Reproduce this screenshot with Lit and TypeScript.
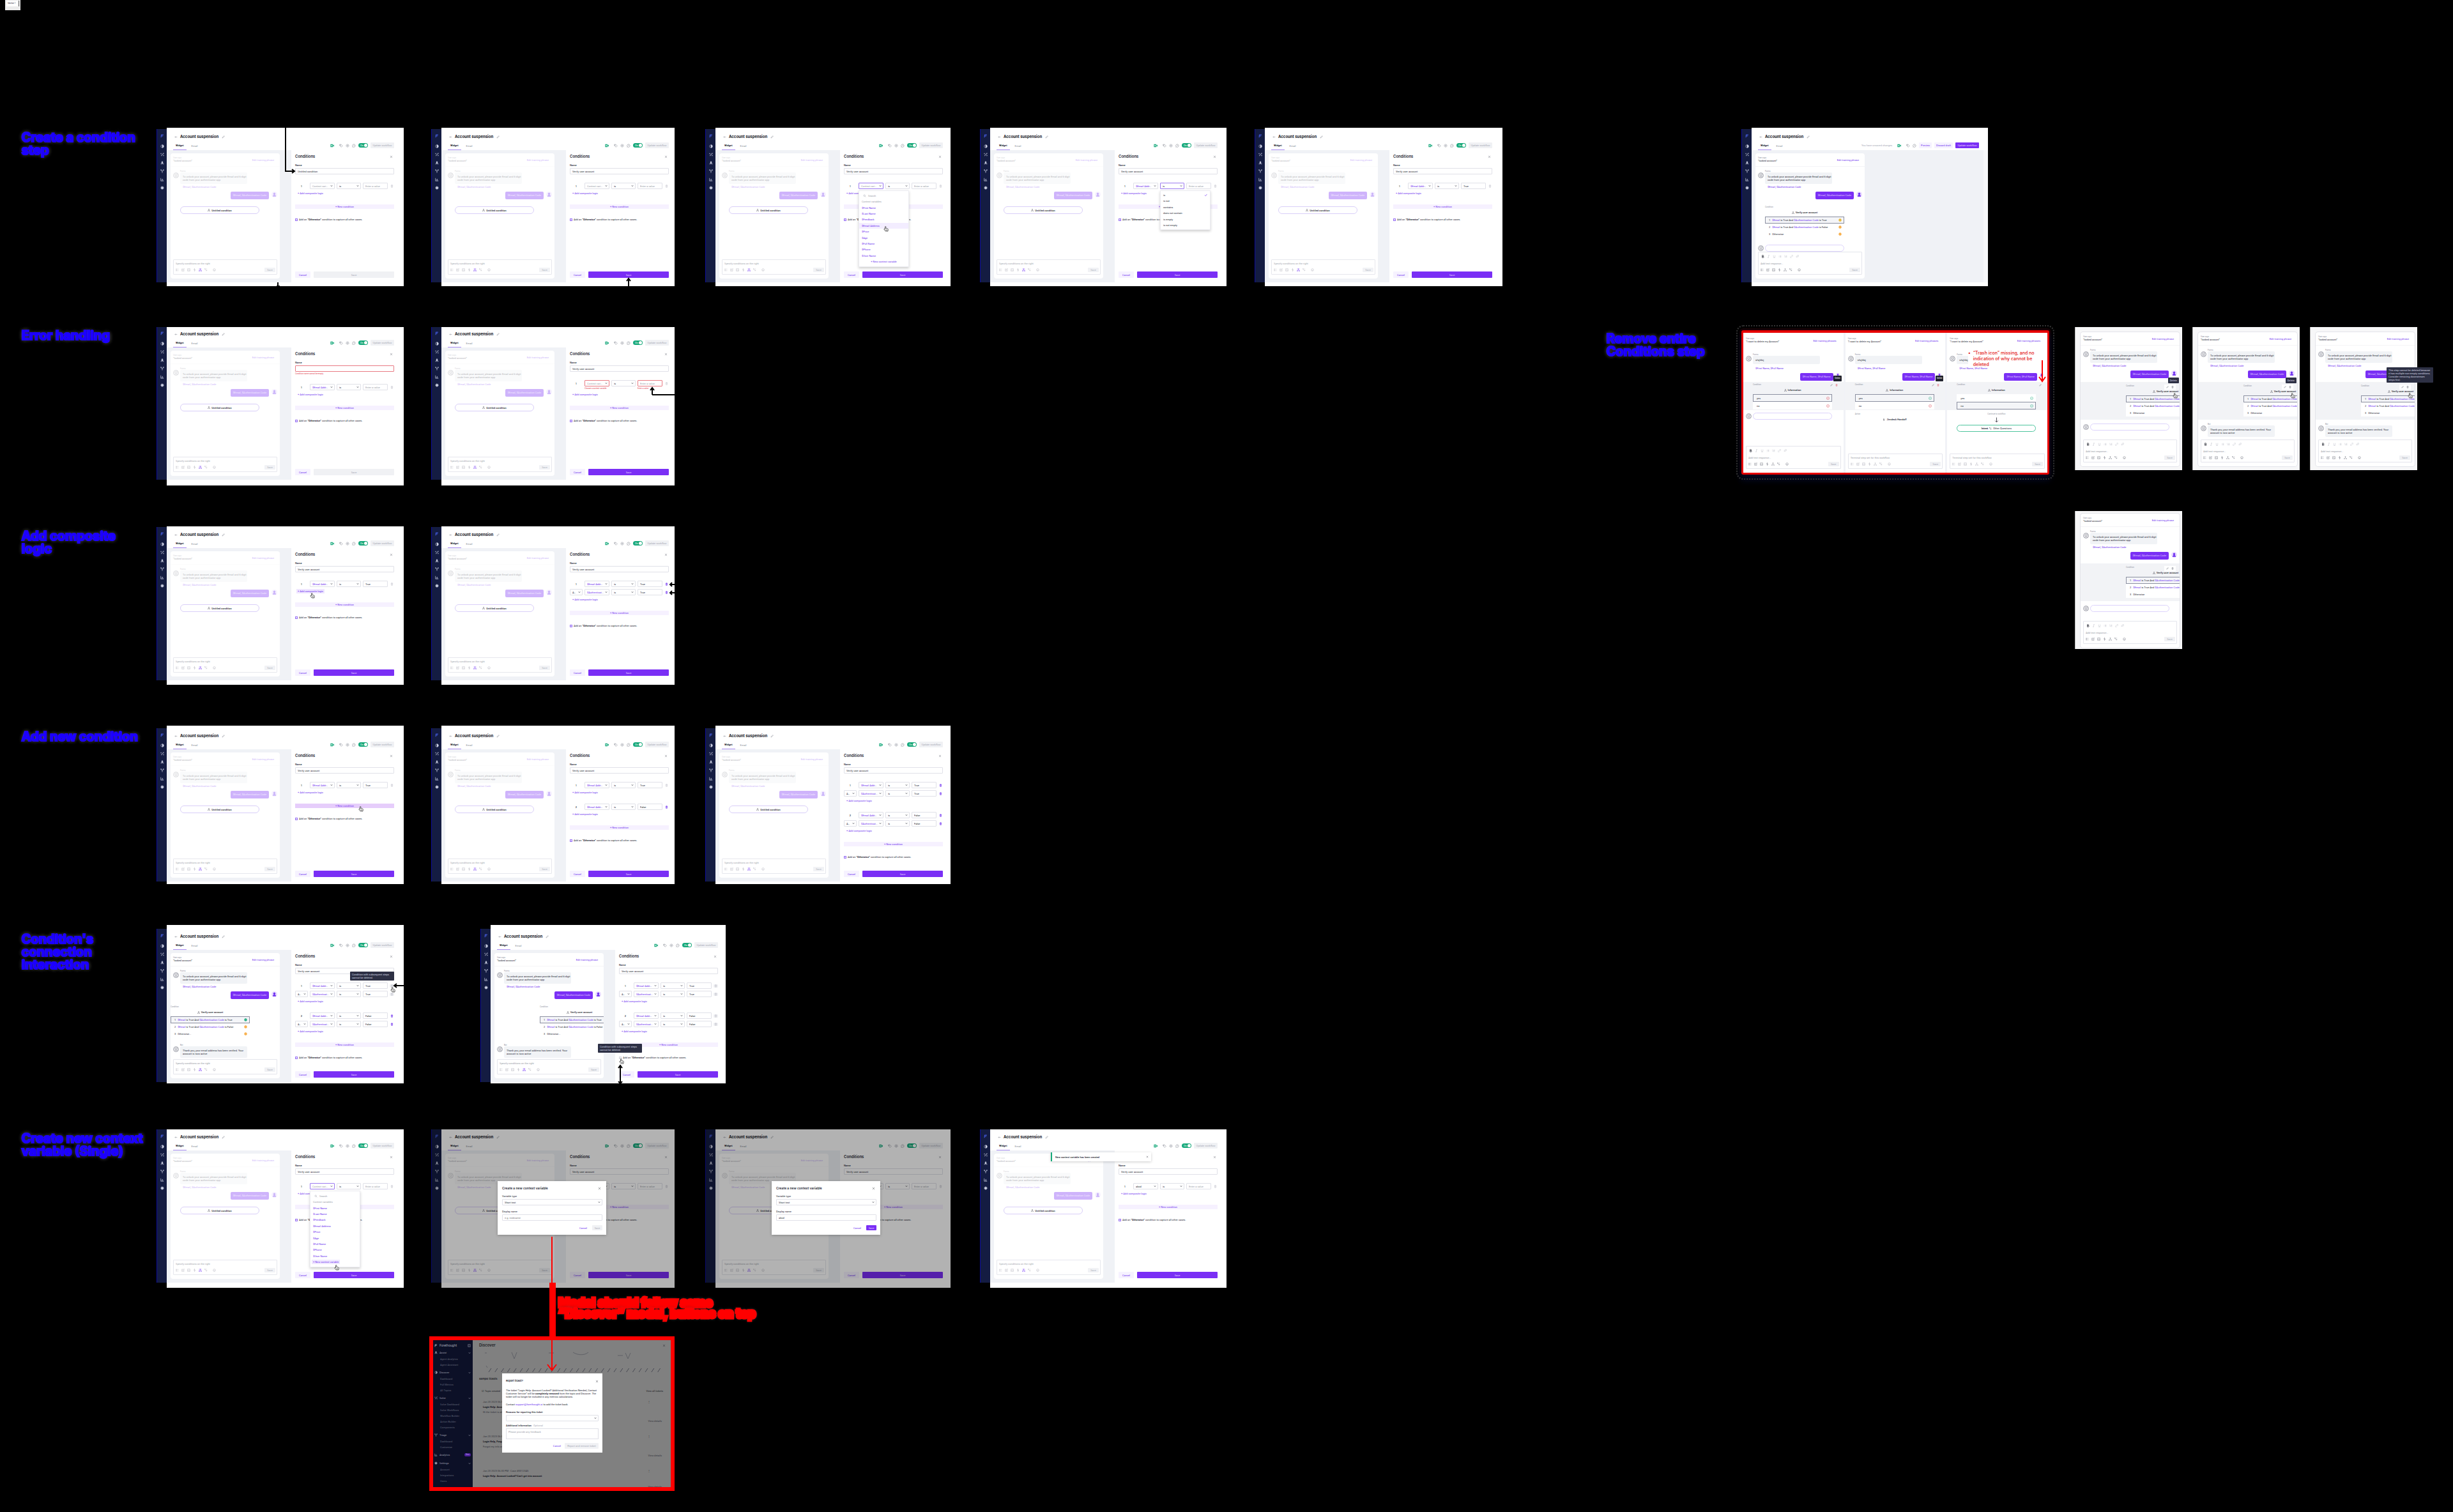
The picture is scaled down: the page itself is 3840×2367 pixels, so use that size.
import { LitElement, html, svg, css, nothing } from "lit";
import { customElement, property } from "lit/decorators.js";
import { classMap } from "lit/directives/class-map.js";

/* ---------- icons ---------- */

const shapes: Record<string, unknown> = {
  back: svg`<path d="M14 8H3M7 4L3 8l4 4"/>`,
  pencil: svg`<path d="M3 13l1-3 8-8 2 2-8 8z"/>`,
  close: svg`<path d="M3 3l10 10M13 3L3 13"/>`,
  trash: svg`<path d="M3 4h10M6 4V2h4v2M4 4l1 10h6l1-10M7 7v4M9 7v4"/>`,
  trashFull: svg`<path d="M3 4h10M6 4V2h4v2"/><path fill="currentColor" fill-opacity=".5" d="M4 5l1 9h6l1-9z"/>`,
  chevron: svg`<path stroke-width="2.4" d="M3 5l5 6 5-6"/>`,
  tree: svg`<path d="M8 5v3M8 8l-4 4M8 8l4 4"/><circle cx="8" cy="3" r="2"/><circle cx="3" cy="13" r="1.6"/><circle cx="13" cy="13" r="1.6"/>`,
  list: svg`<path d="M2 3h3v3H2zM2 10h3v3H2zM8 4h6M8 12h6"/>`,
  compose: svg`<path d="M13 8v6H2V3h6M6 10l1-3 6-6 2 2-6 6z"/>`,
  image: svg`<path d="M2 2h12v12H2zM2 11l4-4 4 4 2-2 2 2M10 5h1"/>`,
  bolt: svg`<path d="M8 1L5 8h3v7l4-8H8z"/>`,
  route: svg`<path d="M3 2v3l9 7M12 8v4H8M9 3h4"/><circle cx="3" cy="3" r="1.5"/>`,
  smile: svg`<circle cx="8" cy="8" r="6"/><path d="M5 9c1 3 5 3 6 0M6 6v1M10 6v1"/>`,
  bold: svg`<path stroke-width="2.2" d="M5 2h4a3 3 0 010 6H5zM5 8h5a3 3 0 010 6H5z"/>`,
  italic: svg`<path stroke-width="1.6" d="M7 2h5M4 14h5M10 2L6 14"/>`,
  underline: svg`<path d="M4 2v6a4 4 0 008 0V2M3 15h10"/>`,
  bullets: svg`<path d="M2 4h1M2 8h1M2 12h1M6 4h8M6 8h8M6 12h8"/>`,
  numbers: svg`<path d="M2 2v4M2 9h2v4M7 4h7M7 8h7M7 12h7"/>`,
  link: svg`<path d="M6 10l5-5M7 4l2-2a3 3 0 015 5l-2 2M9 12l-2 2a3 3 0 01-5-5l2-2"/>`,
  clip: svg`<path d="M12 5l-6 6a2 2 0 01-3-3l7-6a3 3 0 014 5l-6 6"/>`,
  tag: svg`<path d="M2 3h6l6 6-5 5-7-6z"/><circle cx="5" cy="6" r="1"/>`,
  gear: svg`<circle cx="8" cy="8" r="3"/><circle cx="8" cy="8" r="6" stroke-dasharray="3 1.7"/>`,
  gearFull: svg`<circle cx="8" cy="8" r="5" fill="currentColor"/><circle cx="8" cy="8" r="6.4" stroke-dasharray="2.4 2.6"/>`,
  history: svg`<path d="M3 12a6 6 0 111 1l-2 1zM8 5v3l2 1"/>`,
  half: svg`<circle cx="8" cy="8" r="6"/><path fill="currentColor" d="M8 2a6 6 0 010 12z"/>`,
  nodes: svg`<path stroke-width="2" d="M3 13c5 0 1-5 5-5s1-5 5-5"/><circle cx="3" cy="4" r="1.6"/><circle cx="13" cy="12" r="1.6"/><path d="M12 1l3 2-3 2"/>`,
  rocket: svg`<path fill="currentColor" d="M8 1c3 3 3 6 2 10H6C5 7 5 4 8 1z"/><path d="M5 9l-3 4h4M11 9l3 4h-4"/>`,
  fork: svg`<path stroke-width="2" d="M8 15V9L3 3M8 9l5-6"/><circle cx="3" cy="3" r="2"/><circle cx="13" cy="3" r="2"/>`,
  chart: svg`<path stroke-width="1.8" d="M2 2v12h12M6 12V8M9 12V5M12 12v-2"/>`,
  logo: svg`<path stroke-width="3" d="M3 3h10M5 8h6M4 3l-1 11"/>`,
  check: svg`<path stroke-width="2" d="M3 8l4 4 7-9"/>`,
  search: svg`<circle cx="7" cy="7" r="4"/><path d="M10 10l4 4"/>`,
  sidebar: svg`<path d="M2 2h12v12H2zM7 2v12"/>`,
  person: svg`<circle cx="8" cy="6" r="2.4" fill="currentColor"/><path fill="currentColor" d="M4 13c0-5 8-5 8 0z"/>`,
  bot: svg`<circle cx="8" cy="8" r="6.8" stroke-width="1.8"/><path d="M5 5h6v4H5zM4 13c1-3 7-3 8 0"/>`,
  camera: svg`<path fill="currentColor" stroke="none" d="M1 2h10v12H1zM12 6l4-2v8l-4-2z"/><path stroke="#fff" stroke-width="2" d="M6 5v6M3 8h6"/>`,
  ok: svg`<circle cx="8" cy="8" r="6.6"/><path d="M5 8l2 2 4-4"/>`,
  okFull: svg`<circle cx="8" cy="8" r="7" fill="currentColor" stroke="none"/><path stroke="#fff" d="M5 8l2 2 4-4"/>`,
  down: svg`<path d="M8 1v13M4 10l4 4 4-4"/>`,
};

const icon = (name: string, cls = "") =>
  html`<svg class="i ${cls}" viewBox="0 0 16 16" aria-hidden="true">${shapes[name]}</svg>`;

const hand = html`<svg class="hand" viewBox="0 0 16 18" aria-hidden="true">
  <path fill="#fff" stroke="#222" stroke-width="1.4"
    d="M5 9V2.500a1.400 1.400 0 012.800 0V7l5 1c1.600.4 2 1.400 1.800 3l-.8 5H6.500L2 10.500C1 9 3 8 4 9l1 1zM8 11v3M10.500 11v3"/>
</svg>`;

/* ---------- shared styles ---------- */

const base = css`
  * { box-sizing: border-box; }
  :host { font-family: Roboto, "Liberation Sans", sans-serif; font-size: 4px; line-height: 5px; color: #22242f; }
  h1, h2, h3, p, ul { margin: 0; padding: 0; font-weight: 400; }
  ul { list-style: none; }
  button, input, select, textarea {
    font: inherit; color: inherit; margin: 0; padding: 0; border: 0; background: none;
    border-radius: 0; outline: 0; appearance: none; min-width: 0; resize: none;
  }
  a { color: #6b2cf0; text-decoration: none; }
  .i { width: 5px; height: 5px; fill: none; stroke: currentColor; stroke-width: 1.4; flex: none; display: block; }
  .i.s { width: 4px; height: 4px; }
  .i.l { width: 6px; height: 6px; }
  .i.xl { width: 9px; height: 9px; }
  .hand { position: absolute; width: 8px; height: 9px; z-index: 5; }
  .tip {
    position: absolute; z-index: 4; background: #2d3044; color: #d5d7e2; border-radius: 1px;
    padding: 2px 3px; font-size: 4px; line-height: 5px;
  }
  .pick { display: grid; position: relative; }
  .pick select, .field {
    width: 100%; height: 10px; border: 1px solid #e0e1e8; border-radius: 1px; background: #fff; padding: 0 3px;
  }
  .pick .chev { position: absolute; right: 3px; top: 3px; }
  .primary { background: #7a2ff5; color: #e6d6ff; border-radius: 1px; }
  .soft { background: #f6f2ff; color: #6b2cf0; border-radius: 1px; }
  .off { background: #f0f1f4; color: #a5a8b4; border-radius: 1px; }
`;

/* ---------- chat card ---------- */

type Chat = {
  mode?: "ghost" | "flow" | "short";
  shift?: "" | "left" | "right";
  band?: boolean;
  tools?: boolean;
  tail?: "pill" | "bot" | "none" | "handoff" | "intent";
  editor?: "full" | "lite" | "terminal";
  status?: string[];
  picked?: number;
  noTrash?: boolean;
};

@customElement("chat-card")
export class ChatCard extends LitElement {
  @property({ attribute: false }) chat: Chat = {};

  static styles = [base, css`
    :host { display: flex; background: #fff; border-radius: 4px; overflow: hidden; }
    .card { flex: 1; min-width: 0; display: flex; flex-direction: column; }
    .ghost .talk { opacity: 0.36; }
    .head { display: flex; justify-content: space-between; padding: 5px 9px 0 4px; height: 21px; border-bottom: 1px solid #f4f4f7; }
    .head small, .label { display: block; font-size: 3px; line-height: 4px; color: #8d909c; }
    .head a { padding-top: 3px; }
    .msg { display: grid; grid-template-columns: 8px auto; justify-content: start; column-gap: 3px; padding: 5px 0 0 4px; }
    .msg .label { grid-column: 2; }
    .msg .i { color: #9a9ca6; }
    .bubble { width: 105px; background: #f1f3f6; border-radius: 2px; padding: 4px; white-space: nowrap; }
    .vars { grid-column: 2; padding: 2px 0 0 4px; height: 8px; line-height: 6px; color: #6b2cf0; }
    .reply { display: flex; justify-content: flex-end; align-items: flex-start; gap: 4px; padding: 4px 4px 0 0; color: #6b2cf0; position: relative; }
    .reply .say { height: 12px; line-height: 12px; padding: 0 4px; border-radius: 2px; background: #7a2ff5; color: #ddc9ff; white-space: nowrap; }
    .reply .i { background: #eadcff; border-radius: 50%; }
    .cond { margin-top: 6px; padding: 4px 0 5px 15px; position: relative; }
    .band .cond { background: #f2f3f6; }
    .block { width: 124px; }
    .left .cond { padding-left: 0; }
    .right .cond { padding-left: 71px; }
    .title { height: 13px; display: flex; align-items: center; justify-content: center; gap: 2px; font-weight: 500; }
    .rows { background: #fff; }
    .row { display: flex; align-items: center; height: 11px; padding: 0 4px 0 6px; gap: 3px; white-space: nowrap; width: 100%; text-align: left; }
    .row.on { border: 1px solid #8b8fa0; background: #f4f5f8; padding: 0 3px 0 5px; }
    .row .i { margin-left: auto; }
    .orange { color: #f7a83a; } .green { color: #17a97b; } .red { color: #e2414f; } .gold { color: #e6b52c; }
    .tools { position: absolute; right: 6px; top: 4px; display: flex; gap: 4px; padding: 2px 3px; background: #fff; color: #5b5e6c; z-index: 2; }
    .short .tools { background: none; top: 1px; }
    .pill { display: block; width: 124px; height: 11px; border: 1px solid #dcd3fb; border-radius: 6px; background: #fff; }
    .wait { display: grid; grid-template-columns: 8px 124px; column-gap: 3px; padding: 6px 0 0 4px; align-items: center; color: #9a9ca6; }
    .untitled { margin: 11px 0 0 15px; width: 124px; height: 12px; border: 1px solid #d9cff8; border-radius: 6px; display: flex; align-items: center; justify-content: center; gap: 2px; font-weight: 500; }
    .editor { margin: auto 4px 6px; border: 1px solid #e4e5ec; border-radius: 1px; background: #fff; padding: 0 2px 1px 3px; display: flex; flex-direction: column; position: relative; }
    .editor .fmt { display: flex; gap: 4px; height: 12px; align-items: center; padding-left: 1px; color: #b4b6c0; }
    .editor .fmt .i:first-child { color: #22242f; }
    .editor input { height: 10px; color: #9799a4; }
    .editor input::placeholder { color: #9799a4; opacity: 1; }
    .bar { display: flex; align-items: center; gap: 4px; height: 11px; color: #6b6e7b; }
    .ghost .bar, .dim .bar { color: #a9abb6; }
    .bar .act { color: #6b2cf0; background: #eee6ff; }
    .bar button { margin-left: auto; width: 17px; height: 7px; line-height: 7px; }
    .ghost .editor { opacity: 0.9; }
    .short .head { padding: 7px 11px 0 4px; height: 24px; border: 0; }
    .short .msg { padding-top: 8px; }
    .short .vars { padding-top: 4px; }
    .short .cond { margin-top: 2px; padding-top: 2px; padding-bottom: 1px; }
    .short .row { height: 12px; }
    .short .reply { padding-right: 6px; padding-top: 6px; }
    .short .rows { width: 124px; }
    .short .wait { padding-top: 4px; }
    .dark { background: #20232f; color: #fff; position: absolute; right: 3px; top: 10px; font-size: 3px; padding: 2px; z-index: 3; border-radius: 1px; }
    .next { padding: 4px 0 0 15px; width: 139px; }
    .next .title { gap: 3px; }
    .cont { display: flex; flex-direction: column; align-items: center; gap: 3px; color: #22242f; }
    .cont small { font-size: 3px; line-height: 4px; color: #8d909c; }
    .intent { width: 124px; height: 11px; border: 1px solid #4dc49d; border-radius: 6px; display: flex; gap: 2px; align-items: center; justify-content: center; }
  `];

  private talk(c: Chat) {
    const short = c.mode === "short";
    return html`
      <div class="head">
        <div><small>User says</small>${short ? "“I want to delete my Account”" : "“locked account”"}</div>
        <a href="#phrases">${short ? "Edit training phrases" : "Edit training phrase"}</a>
      </div>
      <div class="msg">
        <span class="label">Forms</span>
        ${icon("bot", "xl")}
        <div class="bubble">${short ? "sfsjfdsj" : html`To unlock your account, please provide Email and 6-digit<br>code from your authenticator app`}</div>
        <div class="vars">${short ? "$First Name, $Full Name" : "$Email, $Authentication Code"}</div>
      </div>
      <div class="reply">
        <span class="say">${short ? "$First Name, $Full Name" : "$Email, $Authentication Code"}</span>
        ${icon("person", short ? "l" : "xl")}
        ${short && !c.noTrash ? html`<span class="dark">Delete</span>` : nothing}
      </div>`;
  }

  private rows(c: Chat) {
    const st = c.status ?? ["", "", ""];
    const picked = c.picked ?? 0;
    const mark = (s: string) => s ? icon(c.mode === "short" ? "ok" : "okFull", s) : nothing;
    const v = (t: string) => html`<a href="#variable">${t}</a>`;
    const items = c.mode === "short"
      ? [html`yes`, html`no`]
      : [
          html`<span>1</span><span>${v("$Email")} is True And ${v("$Authentication Code")} is True</span>`,
          html`<span>2</span><span>${v("$Email")} is True And ${v("$Authentication Code")} is False</span>`,
          html`<span>3</span><span>Otherwise${c.shift && !c.band ? "..." : ""}</span>`,
        ];
    return items.map((t, k) => html`<div class=${classMap({ row: true, on: k === picked })}>${t}${mark(st[k])}</div>`);
  }

  private tail(c: Chat) {
    if (c.tail === "bot") return html`<div class="msg">
      <span class="label">Bot</span>${icon("bot", "xl")}
      <div class="bubble">Thank you, your email address has been verified. Your<br>account is now active</div></div>`;
    if (c.tail === "pill") return html`<div class="wait">${icon("bot", "xl")}<span class="pill"></span></div>`;
    if (c.tail === "handoff") return html`<div class="next"><span class="label">Action</span>
      <div class="title">${icon("bolt", "s")}Zendesk Handoff</div></div>`;
    if (c.tail === "intent") return html`<div class="next cont"><small>Continue to workflow</small>${icon("down", "xl")}
      <span class="intent"><b>Intent</b>${icon("route", "s")}Other Questions</span></div>`;
    return nothing;
  }

  render() {
    const c = this.chat;
    const ghost = c.mode === "ghost";
    const editor = c.editor ?? "lite";
    const hint = editor === "full" ? "Add text response..." : editor === "terminal" ? "Terminal step set for this workflow" : "Specify conditions on the right";
    const cls = { card: true, ghost, short: c.mode === "short", band: !!c.band, left: c.shift === "left", right: c.shift === "right", dim: editor !== "full" };
    return html`<div class=${classMap(cls)}>
      <div class="talk">${this.talk(c)}</div>
      ${ghost
        ? html`<div class="untitled">${icon("tree", "s")}Untitled condition</div>`
        : html`<div class="cond">
            ${c.tools ? html`<span class="tools">${icon("pencil", "s")}${c.noTrash ? nothing : icon("trash", c.mode === "short" ? "s red" : "s")}</span>` : nothing}
            <div class="block">
              <span class="label">Condition</span>
              <div class="title">${icon("tree", "s")}${c.mode === "short" ? "Information" : "Verify user account"}</div>
              <div class="rows">${this.rows(c)}</div>
            </div>
          </div>${this.tail(c)}`}
      <div class="editor">
        ${editor === "full" ? html`<div class="fmt">${["bold", "italic", "underline", "bullets", "numbers", "link", "clip"].map((n) => icon(n))}</div>` : nothing}
        <input aria-label="Response" placeholder=${hint}>
        <div class="bar">
          ${["list", "compose", "image", "bolt"].map((n) => icon(n))}
          ${icon("tree", editor === "lite" ? "act" : "")}${icon("route")}<span></span>${icon("smile")}
          <button class="off">Save</button>
        </div>
      </div>
    </div>`;
  }
}

/* ---------- conditions panel ---------- */

type Line = { v?: string; val?: string; bin?: "on" | "off"; err?: boolean; plain?: boolean };
type Panel = {
  name?: string;
  nameError?: boolean;
  groups?: Line[][];
  menu?: "vars" | "vars-new" | "ops";
  hot?: boolean;
  hotAdd?: boolean;
  saveOff?: boolean;
  lockOther?: boolean;
};

const variables = ["$First Name", "$Last Name", "$Feedback", "$Email Address", "$Price", "$Age", "$Full Name", "$Phone", "$User Name"];
const operators = ["is", "is not", "contains", "does not contain", "is empty", "is not empty"];

@customElement("condition-panel")
export class ConditionPanel extends LitElement {
  @property({ attribute: false }) panel: Panel = {};

  static styles = [base, css`
    :host { display: flex; flex-direction: column; background: #fff; padding: 5px 0 7px 6px; }
    .in { width: 155px; flex: 1; display: flex; flex-direction: column; }
    header { display: flex; align-items: center; justify-content: space-between; height: 10px; padding-right: 2px; color: #555866; }
    h2 { font: 600 6px/10px Inter, sans-serif; color: #22242f; }
    .name { display: block; margin-top: 6px; }
    .name span { display: block; height: 7px; font-weight: 500; }
    .err { color: #e2414f; font-size: 3px; line-height: 6px; }
    .bad, .pick .bad { border-color: #e87a83 !important; }
    .groups { display: flex; flex-direction: column; gap: 14px; margin-top: 13px; }
    .group { display: flex; flex-direction: column; gap: 3px; align-items: flex-start; }
    .line { display: grid; grid-template-columns: 20px 39px 38px 39px 7px; column-gap: 3px; align-items: center; }
    .line .n { text-align: center; font-weight: 500; }
    .line .bin { color: #b9bbc5; display: grid; place-items: center; }
    .line .bin.on { color: #6b2cf0; }
    .pick select { text-overflow: ellipsis; padding-right: 8px; }
    .pick.var select { color: #6b2cf0; }
    .pick.var.empty select { color: #9a9ca8; }
    .pick.var.plain select { color: #22242f; }
    .open select { border-color: #9c7af0; }
    input::placeholder { color: #9a9ca8; opacity: 1; }
    .add { height: 7px; line-height: 7px; padding: 0 2px; margin-left: 2px; color: #6b2cf0; }
    .hotadd { background: #efe6ff; }
    .new { height: 7px; line-height: 7px; background: #f6f1ff; color: #6b2cf0; text-align: center; }
    .new.hot { background: #e6cdfb; }
    .other { display: flex; align-items: center; gap: 2px; height: 5px; }
    .other b { font-weight: 700; }
    .other input { width: 4px; height: 4px; border: 1px solid #9a75f2; background: #e5d9ff; }
    .lock .other input { border-color: #d5d6dd; background: #f0f0f4; }
    footer { margin-top: auto; display: grid; grid-template-columns: 24px 1fr; gap: 5px; height: 10px; }
    .menu { position: absolute; top: calc(100% + 2px); left: 0; z-index: 3; width: 79px; background: #fff; border: 1px solid #ececf1; box-shadow: 0 2px 4px #0003; }
    .menu ul { padding: 2px 0; height: 118px; display: flex; flex-direction: column; justify-content: space-between; }
    .menu.ops ul { height: 60px; }
    .menu li { height: 9px; display: flex; align-items: center; padding: 0 4px; color: #6b2cf0; }
    .menu.ops li { color: #22242f; justify-content: space-between; }
    .menu .find { color: #9a9ca8; gap: 3px; height: 10px; padding-left: 6px; }
    .menu .cap { color: #9a9ca8; }
    .menu .sel { background: #f3edff; }
    .menu .mk { justify-content: center; height: 10px; }
    .menu .mk.lft { justify-content: flex-start; }
    .menu .lft span { background: #f0e8ff; padding: 1px 2px; margin-left: -2px; }
    .menu .check { color: #6b2cf0; }
  `];

  private menu(kind: string) {
    if (kind === "ops") return html`<div class="menu ops"><ul>
      ${operators.map((o, k) => html`<li>${o}${k ? nothing : icon("check", "check")}</li>`)}</ul></div>`;
    const fresh = kind === "vars-new";
    return html`<div class="menu"><ul>
      <li class="find">${icon("search")}Search</li>
      <li class="cap">Context variables</li>
      ${variables.map((o, k) => html`<li class=${!fresh && k === 3 ? "sel" : ""}>${o}</li>`)}
      <li class=${fresh ? "mk lft" : "mk"}><span>+ New context variable</span></li></ul></div>`;
  }

  private line(l: Line, g: number, k: number) {
    const m = g === 0 && k === 0 ? this.panel.menu : undefined;
    const cls = { pick: true, var: true, empty: !l.v, plain: !!l.plain, open: !!m && m !== "ops" };
    return html`<div class="line">
      ${k ? html`<span class="pick"><select aria-label="Joiner"><option>And</option></select>${icon("chevron", "s chev")}</span>` : html`<span class="n">${g + 1}</span>`}
      <span class=${classMap(cls)}>
        <select aria-label="Variable" class=${l.err ? "bad" : ""}><option>${l.v ?? "Context varia..."}</option></select>${icon("chevron", "s chev")}
        ${m && m !== "ops" ? this.menu(m) : nothing}
      </span>
      <span class=${classMap({ pick: true, open: m === "ops" })}>
        <select aria-label="Operator"><option>is</option></select>${icon("chevron", "s chev")}
        ${m === "ops" ? this.menu(m) : nothing}
      </span>
      <input class=${l.err ? "field bad" : "field"} aria-label="Value" placeholder="Enter a value" .value=${l.val ?? ""}>
      <button class="bin ${l.bin ?? ""}" aria-label="Delete line">${icon(l.bin === "on" ? "trashFull" : "trash")}</button>
      ${l.err ? html`<span></span><span class="err">Choose a context variable</span><span></span><span class="err">Enter a value</span>` : nothing}
    </div>`;
  }

  render() {
    const p = this.panel;
    const groups = p.groups ?? [[{}]];
    return html`<div class="in ${p.lockOther ? "lock" : ""}">
      <header><h2>Conditions</h2>${icon("close")}</header>
      <label class="name"><span>Name</span><input class=${p.nameError ? "field bad" : "field"} .value=${p.name ?? "Verify user account"}></label>
      ${p.nameError ? html`<p class="err">Condition name cannot be empty</p>` : nothing}
      <div class="groups">
        ${groups.map((g, n) => html`<div class="group">
          ${g.map((l, k) => this.line(l, n, k))}
          <button class=${p.hotAdd ? "add hotadd" : "add"}>+ Add composite logic</button></div>`)}
        <button class=${p.hot ? "new hot" : "new"}>+ New condition</button>
        <label class="other"><input type="checkbox" checked><span>Add an <b>“Otherwise”</b> condition to capture all other cases.</span></label>
      </div>
      <footer><button class="soft">Cancel</button><button class=${p.saveOff ? "off" : "primary"}>Save</button></footer>
    </div>`;
  }
}

/* ---------- application window ---------- */

type Win = {
  x: number; y: number; w: number; h: number; off: number;
  chat?: Chat; panel?: Panel | null;
  hand?: [number, number];
  tip?: [number, number];
  modal?: string | null;
  toast?: boolean;
};

@customElement("flow-screen")
export class FlowScreen extends LitElement {
  @property({ attribute: false }) win!: Win;

  static styles = [base, css`
    :host { display: grid; grid-template-columns: 16px 1fr; overflow: hidden; }
    nav { height: 240px; background: #141c42; border-left: 1px solid #0d0d9a; color: #cfd3e6; display: flex; flex-direction: column; align-items: center; gap: 7px; padding-top: 8px; }
    nav .logo { color: #4359d8; margin-bottom: 3px; }
    main { background: #fff; display: flex; flex-direction: column; min-width: 0; overflow: hidden; }
    .head { width: 356px; padding-left: 10px; }
    .title { display: flex; align-items: center; gap: 3px; height: 12px; padding-left: 2px; color: #777a86; }
    h1 { font: 700 6px/12px Inter, sans-serif; color: #15161d; margin: 0 2px 0 1px; }
    .tabs { display: flex; align-items: center; height: 15px; gap: 4px; }
    .tab { height: 15px; padding: 1px 4px 0; color: #8a8d99; }
    .tab.on { color: #22242f; font-weight: 700; border-bottom: 1px solid #a98df2; }
    .kit { margin-left: auto; display: flex; align-items: center; gap: 4px; color: #7d808c; white-space: nowrap; }
    .cam { color: #17a97b; margin-right: 4px; }
    .switch { width: 15px; height: 7px; border-radius: 4px; background: #17a97b; color: #fff; display: flex; align-items: center; justify-content: space-between; padding: 0 1px 0 3px; }
    .switch input { width: 5px; height: 5px; border-radius: 50%; background: #fff; }
    .kit .upd { height: 9px; width: 37px; }
    .kit .link { height: 9px; padding: 0 3px; }
    .kit small { font-size: 4px; color: #a5a8b4; margin-right: 4px; }
    .body { height: 207px; display: grid; grid-template-columns: 195px 1fr; background: #f0f2f6; }
    .body.wide { border-right: 7px solid #f7f8fa; }
    .left { padding: 5px 18px 6px 6px; display: grid; }
    .shade { position: absolute; inset: 0; background: #0000004d; z-index: 3; }
    .over { position: absolute; left: 0; right: 0; bottom: 0; z-index: 6; pointer-events: none; }
    .modal { position: absolute; left: 104px; top: 83px; width: 170px; background: #fff; padding: 6px 6px 7px 7px; display: grid; box-shadow: 0 1px 4px #0004; }
    .modal header { display: flex; justify-content: space-between; align-items: center; height: 10px; padding-right: 2px; margin-bottom: 5px; }
    .modal h3 { font: 600 5px/10px Inter, sans-serif; }
    .modal label { display: block; margin-bottom: 7px; }
    .modal label > span:first-child { display: block; height: 7px; }
    .modal footer { display: flex; justify-content: flex-end; gap: 6px; height: 8px; }
    .modal footer button { width: 16px; }
    .modal footer .plain { color: #6b2cf0; }
    .toast { position: absolute; left: 111px; top: 38px; width: 157px; height: 14px; background: #fff; border-left: 2px solid #17a97b; box-shadow: 0 1px 4px #0003; display: flex; align-items: center; justify-content: space-between; padding: 0 4px 0 5px; font-weight: 500; }
    .tip { width: 69px; }
    .spot { position: absolute; }
  `];

  render() {
    const w = this.win;
    const wide = w.panel === null;
    return html`
      <nav aria-label="Main" style="margin-top:${w.off + 2}px">
        ${icon("logo", "l logo")}${["half", "nodes", "rocket", "fork", "chart", "gearFull"].map((n) => icon(n, "l"))}
      </nav>
      <main>
        <div class="head" style="padding-top:${w.off + 8}px">
          <div class="title">${icon("back")}<h1>Account suspension</h1>${icon("pencil")}</div>
          <div class="tabs">
            <button class="tab on">Widget</button><button class="tab">Email</button>
            ${wide
              ? html`<div class="kit"><small>You have unsaved changes</small>${icon("camera", "l cam")}${icon("tag", "l")}${icon("history", "l")}
                  <button class="soft link">Preview</button><button class="soft link">Discard draft</button><button class="primary upd">Update workflow</button></div>`
              : html`<div class="kit">${icon("camera", "l cam")}${icon("tag", "l")}${icon("gear", "l")}${icon("history", "l")}
                  <label class="switch">On<input type="checkbox" checked></label><button class="off upd">Update workflow</button></div>`}
          </div>
        </div>
        <div class=${wide ? "body wide" : "body"}>
          <div class="left"><chat-card .chat=${w.chat ?? { mode: "ghost" }}></chat-card></div>
          ${wide ? nothing : html`<condition-panel .panel=${w.panel ?? {}}></condition-panel>`}
        </div>
      </main>
      ${w.modal !== undefined ? html`<div class="shade"></div>` : nothing}
      <div class="over" style="top:${w.off}px">
        ${w.modal !== undefined ? html`<section class="modal">
          <header><h3>Create a new context variable</h3>${icon("close")}</header>
          <label><span>Variable type</span><span class="pick"><select><option>Short text</option></select>${icon("chevron", "s chev")}</span></label>
          <label><span>Display name</span><input class="field" placeholder="e.g. nickname" .value=${w.modal ?? ""}></label>
          <footer><button class="plain">Cancel</button><button class=${w.modal ? "primary" : "off"}>Save</button></footer>
        </section>` : nothing}
        ${w.toast ? html`<div class="toast">New context variable has been created${icon("close", "s")}</div>` : nothing}
        ${w.tip ? html`<div class="tip" style="left:${w.tip[0]}px;top:${w.tip[1]}px">Condition with subsequent steps cannot be deleted.</div>` : nothing}
        ${w.hand ? html`<span class="spot" style="left:${w.hand[0]}px;top:${w.hand[1]}px">${hand}</span>` : nothing}
      </div>`;
  }
}

/* ---------- discover page with report dialog ---------- */

const menuGroups: [string, string, string[]][] = [
  ["rocket", "Assist", ["Agent Analytics", "Agent Assistant"]],
  ["half", "Discover", ["Dashboard", "Full Metrics", "All Topics"]],
  ["nodes", "Solve", ["Solve Dashboard", "Solve Workflows", "Workflow Builder", "Action Builder", "Components"]],
  ["fork", "Triage", ["Dashboard", "Customize"]],
  ["chart", "Analytics", []],
  ["gearFull", "Settings", ["Account", "Integrations", "Users"]],
];

@customElement("discover-page")
export class DiscoverPage extends LitElement {
  static styles = [base, css`
    :host { display: grid; grid-template-columns: 62px 1fr; border: 6px solid #f00; background: #808080; overflow: hidden; }
    nav { background: #0c1027; color: #878a99; padding: 4px 3px 0 2px; }
    .brand { display: flex; align-items: center; gap: 3px; height: 8px; font-size: 5px; color: #a5a8b6; }
    .brand .i:last-child { margin-left: auto; }
    .grp { padding-top: 2px; }
    .top { display: flex; align-items: center; gap: 3px; height: 11px; color: #9a9dac; }
    .top .i:last-child { margin-left: auto; }
    .new { margin-left: auto; background: #4b1d99; color: #b79bea; border-radius: 2px; padding: 0 2px; font-size: 3px; }
    li { height: 9px; line-height: 9px; padding-left: 9px; color: #5e6274; }
    main { padding: 4px 8px 0 10px; color: #1b1c24; overflow: hidden; }
    header { display: flex; justify-content: space-between; align-items: center; height: 8px; }
    h1 { font: 600 6px/8px Inter, sans-serif; }
    .plot { display: block; width: 100%; height: 46px; fill: none; stroke: #4a4b55; stroke-width: 1; }
    h2 { font: 600 4px/6px Inter, sans-serif; }
    .bar { display: flex; justify-content: space-between; align-items: center; height: 30px; padding: 0 4px; }
    .t { height: 54px; padding: 0 6px; display: grid; grid-template-columns: 1fr auto; align-content: start; row-gap: 3px; color: #33343d; }
    .t b { grid-column: 1 / 3; color: #14151c; }
    .t p { grid-column: 1 / 3; }
    .t .more { grid-column: 2; padding-top: 6px; }
    .dialog { position: absolute; left: 108px; top: 52px; width: 157px; background: #fff; padding: 6px; display: grid; color: #22242f; }
    .dialog header { height: 12px; margin-bottom: 6px; }
    .dialog h3 { font: 600 4px/12px Inter, sans-serif; }
    .dialog p { margin-bottom: 7px; }
    .dialog label { display: block; margin-bottom: 4px; }
    .dialog label > span:first-child { display: block; height: 7px; font-weight: 500; }
    .dialog textarea { width: 100%; height: 17px; border: 1px solid #e0e1e8; padding: 2px 3px; display: block; }
    .dialog i { font-style: normal; color: #a5a8b4; padding-left: 2px; font-weight: 400; }
    textarea::placeholder { color: #9a9ca8; opacity: 1; }
    .dialog footer { display: flex; justify-content: flex-end; gap: 6px; height: 9px; margin-top: 2px; }
    .dialog footer .off { width: 53px; }
    .dialog footer .plain { color: #6b2cf0; }
  `];

  render() {
    const ticket = (title: string, text: string) => html`<div class="t">
      <span>Jan 20 2023 06:30 PM · Case #0012345</span><span>⋮</span><b>${title}</b><p>${text}</p><span class="more">View details</span></div>`;
    return html`
      <nav aria-label="Product">
        <div class="brand">${icon("logo")}Forethought${icon("sidebar")}</div>
        ${menuGroups.map(([ic, name, subs]) => html`<div class="grp">
          <div class="top">${icon(ic)}${name}${subs.length ? icon("chevron", "s") : html`<span class="new">New</span>`}</div>
          <ul>${subs.map((s) => html`<li>${s}</li>`)}</ul></div>`)}
      </nav>
      <main>
        <header><h1>Discover</h1>${icon("close")}</header>
        <svg class="plot" viewBox="0 0 290 46" aria-hidden="true">
          <path stroke-width=".6" d="M8 8h3M50 7l4 10 4-10M108 8h8M146 7c8 5 18 5 24 0M216 12h8M228 8l4 9 4-9M10 28l2 3"/>
          <path d=${Array.from({ length: 28 }, (_, k) => `M${14 + k * 9.8} 38l4-6`).join("")}/>
        </svg>
        <h2>Sample tickets</h2>
        <div class="bar"><span>☑ Topic created</span><span>View all tickets</span></div>
        ${ticket("Login Help: Account Locked? Additional Verification", "Hi the ticket is about a locked account")}
        ${ticket("Login Help, Forgot password", "Forgot my info and I have multiple accounts")}
        ${ticket("Login Help: Account Locked? Can't get into account", "")}
      </main>
      <section class="dialog">
        <header><h3>Report ticket?</h3>${icon("close")}</header>
        <p>The ticket “Login Help: Account Locked? Additional Verification Needed, Contact Customer Service” will be <b>completely removed</b> from the topic and Discover. The ticket will no longer be included in any metrics calculations.</p>
        <p>Contact <a href="#support">support@forethought.ai</a> to add the ticket back.</p>
        <label><span>Reasons for reporting this ticket</span><span class="pick"><select><option></option></select>${icon("chevron", "s chev")}</span></label>
        <label><span>Additional information <i>Optional</i></span><textarea placeholder="Please provide any feedback"></textarea></label>
        <footer><button class="plain">Cancel</button><button class="off">Report and remove ticket</button></footer>
      </section>`;
  }
}

/* ---------- board ---------- */

const T: Line = { v: "$Email Addre...", val: "True" };
const A: Line = { v: "$Authenticat...", val: "True" };
const F: Line = { v: "$Email Addre...", val: "False" };
const B: Line = { v: "$Authenticat...", val: "False" };
const bin = (l: Line, b: "on" | "off"): Line => ({ ...l, bin: b });
const two = (a: "on" | "off", b: "on" | "off"): Line[][] => [[bin(T, a), bin(A, a)], [bin(F, b), bin(B, b)]];

const windows: Win[] = [
  { x: 245, y: 200, w: 387, h: 248, off: 0, panel: { name: "Untitled condition", saveOff: true } },
  { x: 675, y: 200, w: 381, h: 248, off: 0 },
  { x: 1104, y: 200, w: 384, h: 248, off: 0, panel: { menu: "vars" }, hand: [279, 154] },
  { x: 1534, y: 200, w: 386, h: 248, off: 0, panel: { menu: "ops", groups: [[{ v: "$Email Addre..." }]] } },
  { x: 1964, y: 200, w: 388, h: 248, off: 0, panel: { groups: [[T]] } },
  { x: 2726, y: 200, w: 386, h: 248, off: 0, panel: null, chat: { mode: "flow", tail: "pill", editor: "full", status: ["gold", "orange", "orange"] } },
  { x: 245, y: 512, w: 387, h: 248, off: -3, panel: { name: "", nameError: true, saveOff: true, groups: [[{ v: "$Email Addre..." }]] } },
  { x: 675, y: 512, w: 381, h: 248, off: -3, panel: { groups: [[{ err: true }]] } },
  { x: 245, y: 824, w: 387, h: 248, off: -1, panel: { groups: [[T]], hotAdd: true }, hand: [240, 105] },
  { x: 675, y: 824, w: 381, h: 248, off: -1, panel: { groups: [[bin(T, "on"), bin(A, "on")]] } },
  { x: 245, y: 1136, w: 387, h: 248, off: 2, panel: { groups: [[T]], hot: true }, hand: [316, 124] },
  { x: 675, y: 1136, w: 381, h: 248, off: 2, panel: { groups: [[T], [bin(F, "on")]] } },
  { x: 1104, y: 1136, w: 384, h: 248, off: 2, panel: { groups: two("on", "on") } },
  { x: 245, y: 1448, w: 387, h: 248, off: 4, panel: { groups: two("off", "on") }, chat: { mode: "flow", shift: "left", tail: "bot", status: ["green", "orange", "orange"] }, tip: [303, 69], hand: [366, 93] },
  { x: 752, y: 1448, w: 384, h: 248, off: 4, panel: { groups: two("off", "off"), lockOther: true }, chat: { mode: "flow", shift: "right", tail: "bot" }, tip: [184, 182], hand: [217, 205] },
  { x: 245, y: 1768, w: 387, h: 248, off: -2, panel: { menu: "vars-new" }, hand: [278, 214] },
  { x: 675, y: 1768, w: 381, h: 248, off: -2, modal: null },
  { x: 1104, y: 1768, w: 384, h: 248, off: -2, modal: "abcd" },
  { x: 1534, y: 1768, w: 386, h: 248, off: -2, panel: { groups: [[{ v: "abcd", plain: true }]] }, toast: true },
];

const notes: { x: number; y: number; lines: string[]; red?: boolean }[] = [
  { x: 34, y: 205, lines: ["Create a condition", "step"] },
  { x: 34, y: 515, lines: ["Error handling"] },
  { x: 34, y: 829, lines: ["Add composite", "logic"] },
  { x: 34, y: 1143, lines: ["Add new condition"] },
  { x: 34, y: 1460, lines: ["Condition's", "connection", "interaction"] },
  { x: 34, y: 1772, lines: ["Create new context", "variable (Single)"] },
  { x: 2515, y: 520, lines: ["Remove entire", "Conditions step"] },
  { x: 874, y: 2031, lines: ["Modal should follow same", "“Discover” modal, buttons on top"], red: true },
];

const details: { x: number; y: number; h: number; top: number; end: number; chat: Chat; live?: string }[] = [
  { x: 3248, y: 512, h: 224, top: 8, end: 6, chat: { tail: "pill" }, live: "Delete" },
  { x: 3432, y: 512, h: 224, top: 8, end: 6, chat: { tail: "bot" }, live: "Delete" },
  { x: 3616, y: 512, h: 224, top: 8, end: 6, chat: { tail: "bot" }, live: "This step cannot be deleted because it has multiple non-empty conditions. Consider removing downstream steps first." },
  { x: 3248, y: 800, h: 216, top: 4, end: 2, chat: { tail: "pill" } },
];

const wires: { d: string; red?: boolean; wide?: boolean }[] = [
  { d: "M447 200V268H460M457 265l4 3-4 3" },
  { d: "M435 442V448M433 448h5" },
  { d: "M984 448V437M981 440l3-4 3 4" },
  { d: "M1021 618V608M1018 611l3-4 3 4M1021 618H1056" },
  { d: "M1056 915H1049M1052 912l-3 3 3 3M1056 928H1049M1052 925l-3 3 3 3" },
  { d: "M632 1543H618M621 1540l-4 3 4 3" },
  { d: "M971 1696V1669M968 1672l3-4 3 4M968 1693l3 3 3-3" },
  { d: "M864 1936V2144M857 2136l7 9 7-9", red: true },
  { d: "M865 2008V2094", red: true, wide: true },
  { d: "M3197 564V596M3192 590l5 7 5-7", red: true },
];

@customElement("app-root")
export class AppRoot extends LitElement {
  static styles = [base, css`
    :host { display: block; position: relative; min-height: 100vh; background: #000; overflow: hidden; }
    .at { position: absolute; }
    .sticker { left: 8px; top: 0; width: 24px; height: 16px; background: #ececec; display: block; padding: 1px 2px; }
    .sticker span { display: block; background: #fff; border-right: 1px solid #555; height: 9px; line-height: 8px; font-size: 3px; padding-left: 2px; }
    .note { font: 700 20px/20px Inter, sans-serif; color: #1c00ff; -webkit-text-stroke: 2px #1c00ff; text-shadow: 0 0 6px #555, 0 0 6px #444; white-space: nowrap; }
    .note.red { color: #f00; -webkit-text-stroke: 5px #f00; font-size: 19px; line-height: 17px; }
    .wires { position: absolute; left: 0; top: 0; width: 3840px; height: 2367px; pointer-events: none; fill: none; z-index: 7; }
    .wires path { stroke: #000; stroke-width: 2; }
    .wires .red { stroke: #f00; stroke-width: 2; }
    .wires .wide { stroke-width: 10; }
    .trio { display: grid; grid-template-columns: repeat(3, 1fr); gap: 3px; background: #f1f2f7; border: 3px solid #e60000; border-top-width: 4px; border-radius: 3px; box-shadow: 0 8px 10px 2px #03071d, 0 0 0 3px #1a0206; outline: 2px dotted #333; outline-offset: 6px; }
    .trio chat-card { border-radius: 0; }
    .remark { font: 500 7px/9px Inter, sans-serif; color: #e31818; display: flex; gap: 4px; background: #fffffff0; }
    .detail { width: 168px; background: #f7f7f8; padding: 0 4px 0 8px; display: grid; border-left: 1px solid #bbb; }
    .detail chat-card { box-shadow: 0 0 0 1px #e3e4ea; }
    .detail .tip { right: 5px; bottom: 136px; }
    .detail .tip.big { width: 73px; left: 119px; right: auto; bottom: 137px; }
    .detail .hand { left: 152px; top: 103px; }
  `];

  render() {
    const short: Chat = { mode: "short", band: true, tools: true };
    return html`
      <div class="at sticker"><span>Section 1</span></div>
      ${notes.map((n) => html`<h2 class="at note ${n.red ? "red" : ""}" style="left:${n.x}px;top:${n.y}px">${n.lines.map((l) => html`${l}<br>`)}</h2>`)}
      ${windows.map((w) => html`<flow-screen class="at" .win=${w} style="left:${w.x}px;top:${w.y}px;width:${w.w}px;height:${w.h}px"></flow-screen>`)}
      <section class="at trio" style="left:2726px;top:517px;width:482px;height:226px">
        <chat-card .chat=${{ ...short, tail: "pill", editor: "full", status: ["red", "red"] }}></chat-card>
        <chat-card .chat=${{ ...short, tail: "handoff", editor: "terminal", status: ["green", "red"] }}></chat-card>
        <chat-card .chat=${{ ...short, tail: "intent", editor: "terminal", status: ["green", "green"], picked: 1, noTrash: true }}></chat-card>
      </section>
      <div class="at remark" style="left:3081px;top:548px"><span>•</span><span>“Trash icon” missing, and no<br>indication of why cannot be<br>deleted</span></div>
      ${details.map((d) => html`<section class="at detail" style="left:${d.x}px;top:${d.y}px;height:${d.h}px;padding-top:${d.top}px;padding-bottom:${d.end}px">
        <chat-card .chat=${{ mode: "flow", shift: "right", band: true, tools: true, editor: "full", ...d.chat }}></chat-card>
        ${d.live ? html`<div class="tip ${d.live.length > 9 ? "big" : ""}">${d.live}</div>${hand}` : nothing}
      </section>`)}
      <discover-page class="at" style="left:672px;top:2092px;width:384px;height:242px"></discover-page>
      <svg class="wires" viewBox="0 0 3840 2367" aria-hidden="true">
        ${wires.map((w) => svg`<path class="${w.red ? "red" : ""} ${w.wide ? "wide" : ""}" d=${w.d}/>`)}
      </svg>`;
  }
}
